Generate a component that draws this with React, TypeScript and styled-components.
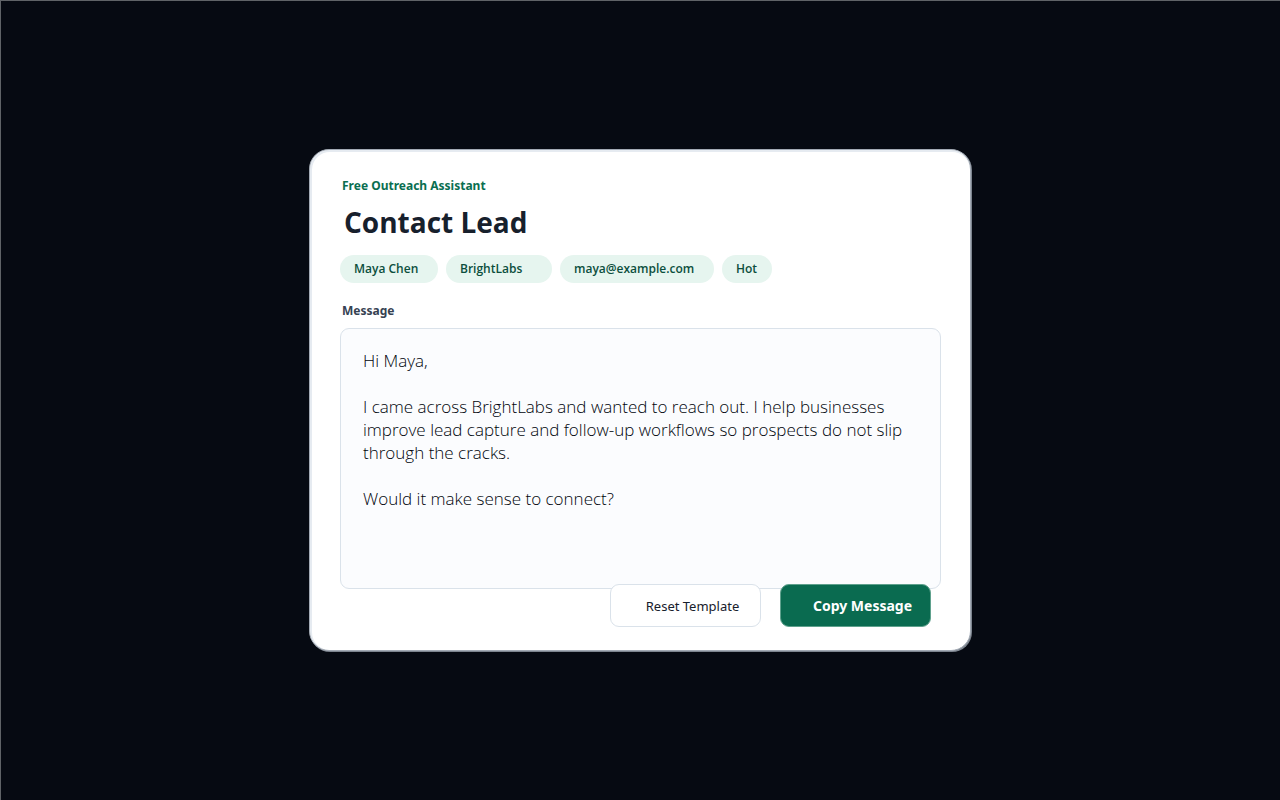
import React, { useState } from "react";
import styled, { createGlobalStyle } from "styled-components";

const GlobalStyle = createGlobalStyle`
  *, *::before, *::after { box-sizing: border-box; }
  body {
    margin: 0;
    background: #060a12;
    color: #17202c;
    font-family: "Noto Sans", "Open Sans", sans-serif;
  }
`;

const Backdrop = styled.main`
  display: flex;
  align-items: center;
  justify-content: center;
  min-height: 100vh;
  background: #060a12;
  box-shadow: inset 1px 1px 0 #5f6367;
`;

const Card = styled.section`
  width: 100%;
  max-width: 662px;
  padding: 26px 29px 23px 30px;
  border: 1px solid #a3abb5;
  border-radius: 20px;
  background: #ffffff;
  box-shadow: inset 1px 1px 0 1px #e6ebf1, 1px 1px 0 #7d858f;
`;

const Eyebrow = styled.p`
  margin: 0;
  padding-left: 2px;
  color: #0a6e50;
  font-size: 12px;
  font-weight: 700;
  line-height: 20px;
`;

const Title = styled.h1`
  margin: 2px 0 9px;
  padding-left: 4px;
  font-family: "Open Sans", sans-serif;
  font-size: 28px;
  font-weight: 700;
  line-height: 48px;
`;

const ChipList = styled.ul`
  display: flex;
  flex-wrap: wrap;
  gap: 8px;
  margin: 0;
  padding: 0;
  list-style: none;
`;

const Chip = styled.li<{ $width: number }>`
  min-width: ${({ $width }) => $width}px;
  padding: 0 14px;
  border-radius: 14px;
  background: #e6f5ef;
  color: #0c4f3d;
  font-family: "Open Sans", sans-serif;
  font-size: 12px;
  font-weight: 600;
  line-height: 28px;
`;

const FieldLabel = styled.label`
  display: block;
  margin: 18px 0 7px;
  padding-left: 2px;
  color: #364252;
  font-size: 12px;
  font-weight: 700;
  line-height: 20px;
`;

const MessageBox = styled.textarea`
  display: block;
  width: 100%;
  height: 261px;
  padding: 20px 22px;
  border: 1px solid #dae2ea;
  border-radius: 9px;
  outline: none;
  resize: none;
  background: #fbfcfe;
  color: #00040c;
  font-family: "Open Sans", sans-serif;
  font-size: 17px;
  font-weight: 300;
  line-height: 23px;
`;

const Actions = styled.div`
  position: relative;
  display: flex;
  justify-content: flex-end;
  gap: 19px;
  margin-top: -5px;
  padding-right: 10px;
`;

const Button = styled.button<{ $primary?: boolean }>`
  width: 151px;
  height: 43px;
  padding: 0 0 0 14px;
  border: 1px solid ${({ $primary }) => ($primary ? "#5fa18d" : "#dae2ea")};
  border-radius: 9px;
  background: ${({ $primary }) => ($primary ? "#0a6b50" : "#ffffff")};
  color: ${({ $primary }) => ($primary ? "#ffffff" : "#17202c")};
  font-family: inherit;
  font-size: ${({ $primary }) => ($primary ? 14 : 13)}px;
  font-weight: ${({ $primary }) => ($primary ? 700 : 400)};
  cursor: pointer;
`;

const chips = [
  { text: "Maya Chen", width: 98 },
  { text: "BrightLabs", width: 106 },
  { text: "maya@example.com", width: 154 },
  { text: "Hot", width: 50 },
];

const template = `Hi Maya,

I came across BrightLabs and wanted to reach out. I help businesses improve lead capture and follow-up workflows so prospects do not slip through the cracks.

Would it make sense to connect?`;

export default function App() {
  const [message, setMessage] = useState(template);

  return (
    <>
      <GlobalStyle />
      <Backdrop>
        <Card aria-labelledby="contact-title">
          <Eyebrow>Free Outreach Assistant</Eyebrow>
          <Title id="contact-title">Contact Lead</Title>
          <ChipList>
            {chips.map((chip) => (
              <Chip key={chip.text} $width={chip.width}>
                {chip.text}
              </Chip>
            ))}
          </ChipList>
          <FieldLabel htmlFor="message">Message</FieldLabel>
          <MessageBox
            id="message"
            spellCheck={false}
            value={message}
            onChange={(event) => setMessage(event.target.value)}
          />
          <Actions>
            <Button type="button" onClick={() => setMessage(template)}>
              Reset Template
            </Button>
            <Button
              type="button"
              $primary
              onClick={() => navigator.clipboard?.writeText(message)}
            >
              Copy Message
            </Button>
          </Actions>
        </Card>
      </Backdrop>
    </>
  );
}
